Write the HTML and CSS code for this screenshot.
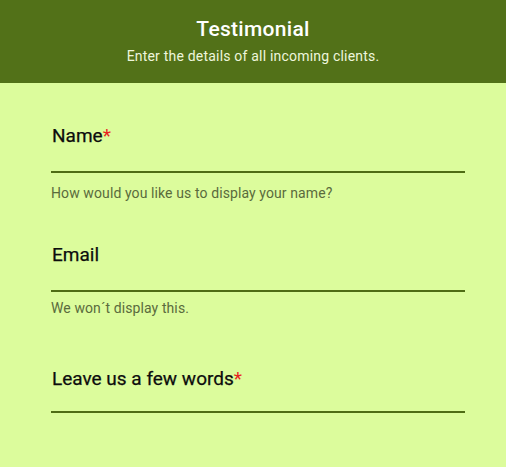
FILE: index.html
```html
<!DOCTYPE html>
<html>
<head>
<meta charset="utf-8">
<link rel="stylesheet" href="styles.css">
</head>
<body>
<header class="header">
  <h1 class="title">Testimonial</h1>
  <p class="subtitle">Enter the details of all incoming clients.</p>
</header>
<main class="form">
  <div class="field field-name">
    <label class="label">Name<span class="req">*</span></label>
    <div class="input"></div>
    <p class="help">How would you like us to display your name?</p>
  </div>
  <div class="field field-email">
    <label class="label">Email</label>
    <div class="input"></div>
    <p class="help help-tight">We won´t display this.</p>
  </div>
  <div class="field field-words">
    <label class="label">Leave us a few words<span class="req">*</span></label>
    <div class="input input-short"></div>
  </div>
</main>
</body>
</html>
```

FILE: styles.css
```css
html, body {
  margin: 0;
  padding: 0;
  background: #dcfc9c;
  height: 100%;
}
body {
  font-family: Roboto, "Noto Sans", sans-serif;
}
.header {
  height: 83px;
  background: #527118;
  display: flex;
  flex-direction: column;
  align-items: center;
  box-sizing: border-box;
  padding-top: 17px;
  color: #ffffff;
}
.title {
  margin: 0;
  font-weight: 500;
  font-size: 21px;
  line-height: 24px;
  letter-spacing: 0.3px;
}
.subtitle {
  margin: 6px 0 0;
  font-size: 14px;
  line-height: 18px;
  color: #eef6dc;
  letter-spacing: 0.2px;
}
.form {
  padding: 41px 41px 0 51px;
}
.field {
  display: flex;
  flex-direction: column;
}
.field-email { margin-top: 40px; }
.field-words { margin-top: 49px; }
.label {
  font-size: 19px;
  line-height: 24px;
  font-weight: 400;
  color: #0d0d0d;
  padding-left: 1px;
  -webkit-text-stroke: 0.25px #0d0d0d;
}
.req {
  color: #e8231f;
  -webkit-text-stroke: 0;
}
.input {
  height: 23px;
  border-bottom: 2px solid #4f6c14;
}
.input-short {
  height: 20px;
}
.help {
  margin: 10px 0 0;
  font-size: 14px;
  line-height: 20px;
  color: #5a6b3c;
  letter-spacing: 0.1px;
}
.help-tight {
  margin-top: 6px;
}
```
